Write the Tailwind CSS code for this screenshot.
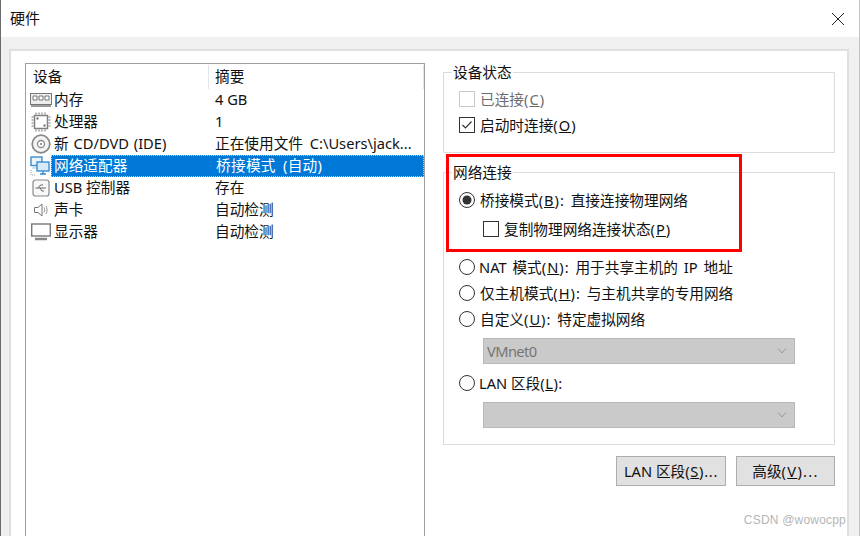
<!doctype html>
<html lang="zh"><head><meta charset="utf-8"><script src="https://cdn.jsdelivr.net/npm/@tailwindcss/browser@4"></script></head>
<body class="m-0 overflow-hidden bg-white">
<div class="relative w-[860px] h-[536px] overflow-hidden flex flex-col bg-white border-l border-r border-l-[#6b6b6b] border-r-[#c4c4c4] text-[14.67px] leading-[22px] text-[#111] font-['Noto_Sans','Noto_Sans_CJK_SC',sans-serif]">
  <header class="h-[37px] shrink-0 flex items-center justify-between pl-[9px] pr-[14px]">
    <span class="text-[15px] pb-[2px]">硬件</span>
    <svg class="w-[14px] h-[14px]" viewBox="0 0 14 14"><path d="M1 1 13 13M13 1 1 13" stroke="#222" stroke-width="1" fill="none"/></svg>
  </header>
  <div class="flex-1 bg-[#f0f0f0] pt-[12px] pl-[8px] pr-[10px]">
    <div class="h-full bg-white border-t-2 border-l-2 border-r-2 border-[#dfdfdf] pt-[12px] pl-[14px] flex">
      <section class="w-[400px] h-[500px] shrink-0 border border-[#a0a0a0] flex flex-col">
        <div class="h-[25px] flex items-center shrink-0">
          <span class="w-[183px] pl-[7px] border-r border-[#e5e5e5] pb-[2px]">设备</span><span class="flex-1 pl-[6px] border-r border-[#e5e5e5] pb-[2px]">摘要</span>
        </div>
        <div class="h-[22px] flex items-center">
          <span class="w-[28px] flex justify-center pl-[2px] shrink-0"><svg width="22" height="14" viewBox="0 0 22 14"><rect x=".5" y=".5" width="21" height="11" fill="#eee" stroke="#777"/><path d="M3 3h4v4H3zM9 3h4v4H9zM15 3h4v4h-4z" fill="#fff" stroke="#777"/><path d="M1 13h20" stroke="#999" stroke-width="2"/></svg></span>
          <span class="w-[156px] pb-[2px]">内存</span><span class="pl-[5px] pb-[2px]">4 GB</span>
        </div>
        <div class="h-[22px] flex items-center">
          <span class="w-[28px] flex justify-center pl-[2px] shrink-0"><svg width="20" height="20" viewBox="0 0 20 20"><rect x="3.500" y="3.500" width="13" height="13" fill="#fff" stroke="#808080" stroke-width="1.500"/><rect x="5.500" y="5.500" width="2" height="2" fill="#666"/><rect x="12.500" y="12.500" width="2" height="2" fill="#666"/><path d="M5 .5v2M8 .5v2M11 .5v2M14 .5v2M5 17.500v2M8 17.500v2M11 17.500v2M14 17.500v2M.5 5h2M.5 8h2M.5 11h2M.5 14h2M17.500 5h2M17.500 8h2M17.500 11h2M17.500 14h2" stroke="#a0a0a0" stroke-width="1.500"/></svg></span>
          <span class="w-[156px] pb-[2px]">处理器</span><span class="pl-[5px] pb-[2px]">1</span>
        </div>
        <div class="h-[22px] flex items-center">
          <span class="w-[28px] flex justify-center pl-[2px] shrink-0"><svg width="20" height="20" viewBox="0 0 20 20"><circle cx="10" cy="10" r="8.800" fill="#f4f4f4" stroke="#8a8a8a" stroke-width="1.700"/><circle cx="10" cy="10" r="3.500" fill="#fff" stroke="#8a8a8a" stroke-width="1.300"/><circle cx="10" cy="10" r="1" fill="#777"/></svg></span>
          <span class="w-[156px] whitespace-nowrap pb-[2px] [word-spacing:1px]">新 CD/DVD (IDE)</span><span class="pl-[5px] whitespace-nowrap pb-[2px] [word-spacing:3px]">正在使用文件 C:\Users\jack...</span>
        </div>
        <div class="h-[22px] flex items-center">
          <span class="w-[25px] flex justify-center pl-[2px] shrink-0"><svg width="20" height="20" viewBox="0 0 20 20"><rect x="1" y="1" width="11" height="8.500" fill="#e8f3fb" stroke="#2f86c9" stroke-width="1.300"/><path d="M4 9.500v2M2 12h5" stroke="#a9cbe6"/><rect x="7" y="6" width="12" height="9" fill="#d6ebf9" stroke="#2f86c9" stroke-width="1.300"/><path d="M13 15v2.500M10 18h6" stroke="#2f86c9" stroke-width="1.300"/><path d="M1 14v5h5" stroke="#999" stroke-dasharray="1 1" fill="none"/></svg></span>
          <span class="flex-1 flex h-full bg-[#0078d7] text-white border border-dotted border-[#f3c08a] items-center">
            <span class="w-[164px] pl-[2px] pb-[2px]">网络适配器</span><span class="pb-[2px] [word-spacing:3px] tracking-[0.3px]">桥接模式 (自动)</span>
          </span>
        </div>
        <div class="h-[22px] flex items-center">
          <span class="w-[28px] flex justify-center pl-[2px] shrink-0"><svg width="18" height="18" viewBox="0 0 18 18"><rect x="1" y="1" width="16" height="16" rx="2.500" fill="#f8f8f8" stroke="#888" stroke-width="1.200"/><path d="M3.500 9H14M6 9l2.500-3H11M8 9l2 3h2" stroke="#666" fill="none"/></svg></span>
          <span class="w-[156px] whitespace-nowrap pb-[2px]">USB 控制器</span><span class="pl-[5px] pb-[2px]">存在</span>
        </div>
        <div class="h-[22px] flex items-center">
          <span class="w-[28px] flex justify-center pl-[2px] shrink-0"><svg width="18" height="18" viewBox="0 0 18 18"><path d="M2.500 6.500H6L10 3v12L6 11.500H2.500z" fill="#fff" stroke="#777"/><path d="M12 6.500c1 1.500 1 3.500 0 5M14 5c1.500 2.500 1.500 5.500 0 8" stroke="#999" fill="none"/></svg></span>
          <span class="w-[156px] pb-[2px]">声卡</span><span class="pl-[5px] pb-[2px]">自动检测</span>
        </div>
        <div class="h-[22px] flex items-center">
          <span class="w-[28px] flex justify-center pl-[2px] shrink-0"><svg width="20" height="18" viewBox="0 0 20 18"><rect x=".7" y="1" width="18.600" height="12" fill="#fff" stroke="#777" stroke-width="1.400"/><path d="M4 16h12" stroke="#888" stroke-width="2.500"/></svg></span>
          <span class="w-[156px] pb-[2px]">显示器</span><span class="pl-[5px] pb-[2px]">自动检测</span>
        </div>
      </section>

      <div class="w-[392px] ml-[18px] pt-[9px] flex flex-col">
        <section class="h-[81px] border border-[#dcdcdc] pl-[15px]">
          <h2 class="-mt-[12px] mb-[1px] -ml-[7px] w-fit px-[1px] bg-white font-normal">设备状态</h2>
          <div class="h-[26px] mt-[3px] flex items-center text-[#6d6d6d]">
            <span class="w-[16px] h-[16px] border border-[#c8c8c8]"></span><span class="ml-[5px]">已连接<span class="tracking-[1px]">(<u>C</u>)</span></span>
          </div>
          <div class="h-[26px] flex items-center">
            <svg class="w-[16px] h-[16px]" viewBox="0 0 16 16"><rect x=".5" y=".5" width="15" height="15" fill="#fff" stroke="#333"/><path d="M3.500 8 6.500 11 12.500 4.500" stroke="#333" stroke-width="1.200" fill="none"/></svg><span class="ml-[5px]">启动时连接<span class="tracking-[1px]">(<u>O</u>)</span></span>
          </div>
        </section>
        <section class="h-[273px] mt-[19px] border border-[#dcdcdc] pl-[15px]">
          <h2 class="-mt-[12px] mb-[1px] -ml-[7px] w-fit px-[1px] bg-white font-normal">网络连接</h2>
          <div class="h-[26px] mt-[4px] flex items-center">
            <svg class="w-[16px] h-[16px] shrink-0" viewBox="0 0 16 16"><circle cx="8" cy="8" r="7.500" fill="#fff" stroke="#333"/><circle cx="8" cy="8" r="4.500" fill="#333"/></svg><span class="ml-[5px] [word-spacing:2px]">桥接模式<span class="tracking-[1px]">(<u>B</u>):</span> 直接连接物理网络</span>
          </div>
          <div class="h-[26px] mt-[3px] pl-[24px] flex items-center">
            <span class="w-[16px] h-[16px] border border-[#333]"></span><span class="ml-[5px]">复制物理网络连接状态<span class="tracking-[1px]">(<u>P</u>)</span></span>
          </div>
          <div class="h-[26px] mt-[12px] flex items-center">
            <svg class="w-[16px] h-[16px] shrink-0" viewBox="0 0 16 16"><circle cx="8" cy="8" r="7.500" fill="#fff" stroke="#333"/></svg><span class="ml-[4px] [word-spacing:2px]">NAT 模式<span class="tracking-[1px]">(<u>N</u>):</span> 用于共享主机的 IP 地址</span>
          </div>
          <div class="h-[26px] flex items-center">
            <svg class="w-[16px] h-[16px] shrink-0" viewBox="0 0 16 16"><circle cx="8" cy="8" r="7.500" fill="#fff" stroke="#333"/></svg><span class="ml-[5px] [word-spacing:2px]">仅主机模式<span class="tracking-[1px]">(<u>H</u>):</span> 与主机共享的专用网络</span>
          </div>
          <div class="h-[26px] flex items-center">
            <svg class="w-[16px] h-[16px] shrink-0" viewBox="0 0 16 16"><circle cx="8" cy="8" r="7.500" fill="#fff" stroke="#333"/></svg><span class="ml-[5px] [word-spacing:2px]">自定义<span class="tracking-[1px]">(<u>U</u>):</span> 特定虚拟网络</span>
          </div>
          <div class="ml-[24px] mt-[6px] w-[312px] h-[26px] bg-[#cacaca] border border-[#b8b8b8] flex items-center justify-between pl-[3px] pr-[7px] text-[#757575]">
            <span class="tracking-[-0.6px]">VMnet0</span>
            <svg class="w-[10px] h-[6px]" viewBox="0 0 10 6"><path d="M1 .5 5 5 9 .5" stroke="#9a9a9a" fill="none"/></svg>
          </div>
          <div class="h-[26px] mt-[6px] flex items-center">
            <svg class="w-[16px] h-[16px] shrink-0" viewBox="0 0 16 16"><circle cx="8" cy="8" r="7.500" fill="#fff" stroke="#333"/></svg><span class="ml-[4px]">LAN 区段<span class="tracking-[0.5px]">(<u>L</u>):</span></span>
          </div>
          <div class="ml-[24px] mt-[6px] w-[312px] h-[26px] bg-[#cacaca] border border-[#b8b8b8] flex items-center justify-end pr-[7px]">
            <svg class="w-[10px] h-[6px]" viewBox="0 0 10 6"><path d="M1 .5 5 5 9 .5" stroke="#9a9a9a" fill="none"/></svg>
          </div>
        </section>
        <div class="mt-[11px] flex justify-end gap-[10px]">
          <button class="w-[110px] h-[30px] bg-[#e1e1e1] border border-[#adadad]">LAN 区段<span class="tracking-[0.7px]">(<u>S</u>)...</span></button>
          <button class="w-[99px] h-[30px] bg-[#e1e1e1] border border-[#adadad]">高级<span class="tracking-[1.3px]">(<u>V</u>)...</span></button>
        </div>
      </div>
    </div>
  </div>
  <div class="absolute left-[445px] top-[154px] w-[296px] h-[98px] border-[3px] border-[#f00]"></div>
  <div class="absolute right-[13px] bottom-[8px] text-[12px] leading-[16px] tracking-[0.2px] text-[#b5b5b5] font-['Liberation_Sans',sans-serif]">CSDN @wowocpp</div>
</div>
</body></html>
